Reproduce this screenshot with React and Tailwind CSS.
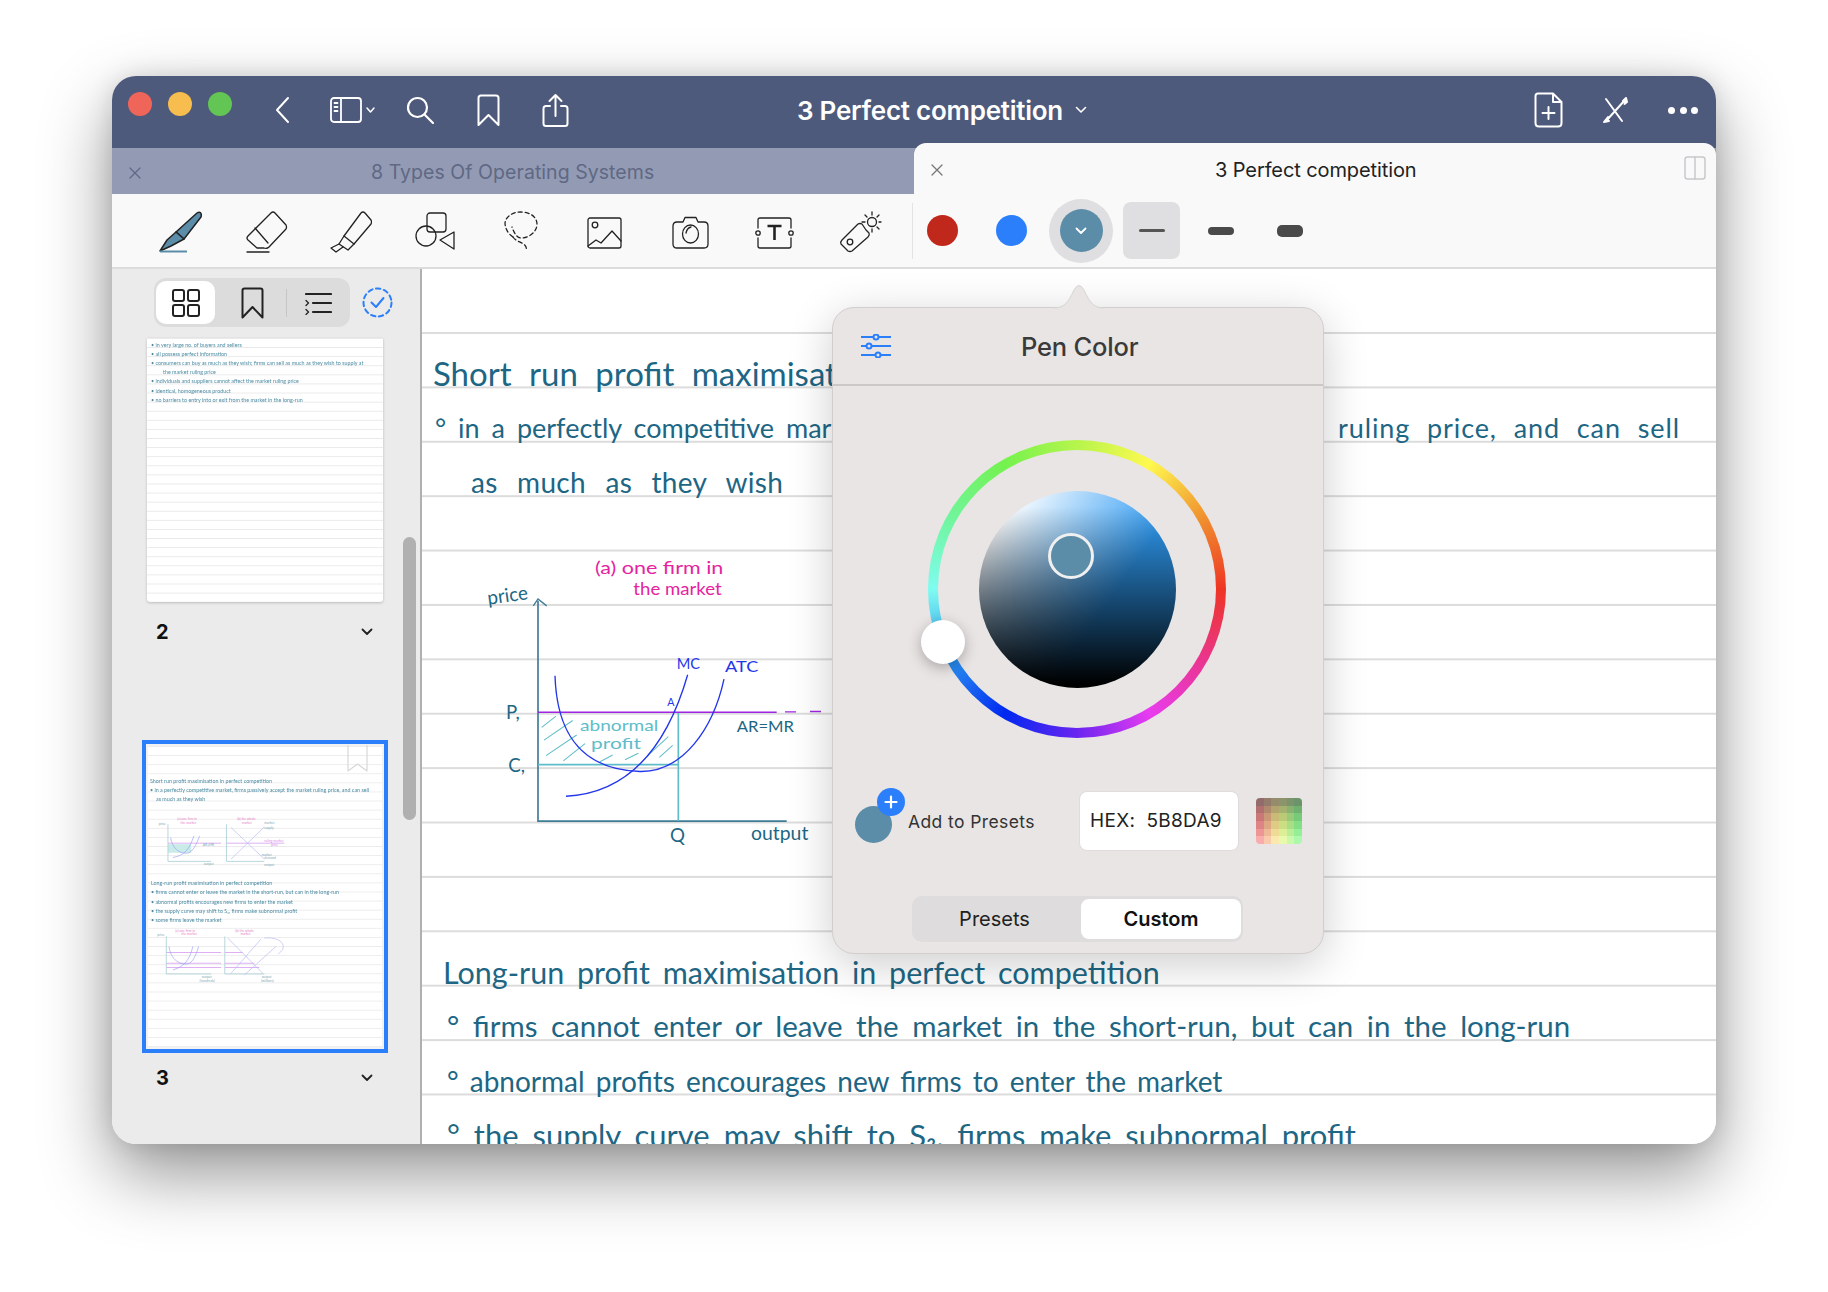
import React from "react";

const ui = "font-['Inter','Liberation_Sans',sans-serif]";
const ink = "font-['Lato','Open_Sans',sans-serif] font-normal text-[#1d6684]";

const swatchCells = [];
for (let r = 0; r < 6; r++) {
  for (let c = 0; c < 6; c++) {
    swatchCells.push({
      key: `${r}-${c}`,
      color: `hsl(${c * 24} ${16 + r * 14}% ${50 + r * 6.5}%)`,
    });
  }
}

function Stroke({ w, h, sw = 2, color = "#fff", children }) {
  return (
    <svg width={w} height={h} viewBox={`0 0 ${w} ${h}`} fill="none" stroke={color} strokeWidth={sw} strokeLinecap="round" strokeLinejoin="round" className="shrink-0">
      {children}
    </svg>
  );
}

function TitleBar() {
  return (
    <div className="flex h-[72px] items-center bg-[#4e5a7b] pb-1 pl-4 pr-[18px]">
      <div className="flex -translate-y-1.5 gap-4">
        <div className="h-6 w-6 rounded-full bg-[#f0655a]" />
        <div className="h-6 w-6 rounded-full bg-[#f7bd4f]" />
        <div className="h-6 w-6 rounded-full bg-[#62c554]" />
      </div>
      <div className="ml-[42px]">
        <Stroke w={16} h={28}>
          <path d="M14 2 L3 14 L14 26" />
        </Stroke>
      </div>
      <div className="ml-10">
        <Stroke w={48} h={26} sw={1.8}>
          <rect x="1" y="1" width="30" height="24" rx="3" />
          <path d="M11 1 V25 M4.5 6 H7.5 M4.5 10 H7.5 M4.5 14 H7.5" />
          <path d="M37 11 L40.5 15 L44 11" strokeWidth="1.5" />
        </Stroke>
      </div>
      <div className="ml-7">
        <Stroke w={28} h={28} sw={2.2}>
          <circle cx="11.5" cy="11.5" r="9.5" />
          <path d="M18.5 18.5 L27 27" />
        </Stroke>
      </div>
      <div className="ml-[43px]">
        <Stroke w={23} h={33} sw={2}>
          <path d="M1.5 4 Q1.5 1.5 4 1.5 H19 Q21.5 1.5 21.5 4 V31 L11.5 21 L1.5 31 Z" />
        </Stroke>
      </div>
      <div className="ml-[42px]">
        <Stroke w={27} h={35} sw={2}>
          <path d="M8 13 H4 Q1.5 13 1.5 15.5 V30.5 Q1.5 33 4 33 H23 Q25.5 33 25.5 30.5 V15.5 Q25.5 13 23 13 H19" />
          <path d="M13.5 23 V2 M7.5 8 L13.5 2 L19.5 8" />
        </Stroke>
      </div>
      <div className={`${ui} ml-[228px] flex items-center gap-3 text-[26px] font-semibold tracking-[-0.25px] text-white`}>
        <span>3 Perfect competition</span>
        <Stroke w={12} h={8} sw={1.6}>
          <path d="M1.5 1.5 L6 6 L10.5 1.5" />
        </Stroke>
      </div>
      <div className="ml-auto flex items-center gap-10">
        <Stroke w={29} h={36} sw={2}>
          <path d="M4 1.5 H19 L27.5 10 V31 Q27.5 34.5 24 34.5 H5 Q1.5 34.5 1.5 31 V4 Q1.5 1.5 4 1.5 Z M19 1.5 V10 H27.5" />
          <path d="M14.5 15 V27 M8.5 21 H20.5" />
        </Stroke>
        <Stroke w={25} h={26} sw={2}>
          <path d="M3 2 L19 24 M22 3 L3 24" />
          <path d="M20 4 L23 1 L24 5 L21.5 7" fill="#fff" />
          <path d="M5 20 L1 25 L6 24" fill="#fff" />
        </Stroke>
        <div className="flex w-[30px] justify-between">
          <div className="h-[7px] w-[7px] rounded-full bg-white" />
          <div className="h-[7px] w-[7px] rounded-full bg-white" />
          <div className="h-[7px] w-[7px] rounded-full bg-white" />
        </div>
      </div>
    </div>
  );
}

function Tabs() {
  return (
    <div className={`${ui} flex h-[46px] bg-[#939bb4]`}>
      <div className="flex w-[802px] items-center pl-[17px] pt-1 text-[19.5px] tracking-[0.05px] text-[#5f6884]">
        <Stroke w={12} h={12} sw={1.3} color="#5f6884">
          <path d="M1 1 L11 11 M11 1 L1 11" />
        </Stroke>
        <span className="ml-[230px]">8 Types Of Operating Systems</span>
      </div>
      <div className="-mt-[5px] flex h-[51px] flex-1 items-center rounded-t-[12px] bg-[#f9f9f9] pl-[17px] pr-2.5 pt-0.5 text-[#222]">
        <Stroke w={12} h={12} sw={1.3} color="#777">
          <path d="M1 1 L11 11 M11 1 L1 11" />
        </Stroke>
        <span className="ml-[272px] text-[20px] tracking-[-0.1px]">3 Perfect competition</span>
        <div className="ml-auto mb-1">
          <Stroke w={22} h={24} sw={1.5} color="#c8c8cc">
            <rect x="1" y="1" width="20" height="22" rx="2.5" />
            <path d="M11 1 V23" />
          </Stroke>
        </div>
      </div>
    </div>
  );
}

function Toolbar() {
  const k = "#222";
  return (
    <div className="flex h-[75px] items-center border-b-2 border-[#dcdcdc] bg-[#f9f9f9] pl-[47px]">
      <svg width="43" height="42" viewBox="0 0 43 42" className="mt-[2px] shrink-0">
        <path d="M38 2 C41 0 43 2 42 6 L25 28 L17 21 Z" fill="#5b8da9" stroke="#222" strokeWidth="1.5" strokeLinejoin="round" />
        <path d="M17 21 L25 28 L12 35 L1 40 L8 29 Z" fill="#5b8da9" stroke="#222" strokeWidth="1.5" strokeLinejoin="round" />
        <path d="M1 40.5 H28" stroke="#5b8da9" strokeWidth="2" />
      </svg>
      <div className="ml-11 mt-[2px]">
        <Stroke w={42} h={42} sw={1.3} color={k}>
          <path d="M25 2 Q27 0 29 2 L40 14 Q41 16 40 18 L23 36 Q21 38 18 37 H11 L2 29 Q0 27 2 25 Z" />
          <path d="M9 17 L22 32" />
          <path d="M1 41 H23" />
        </Stroke>
      </div>
      <div className="ml-[42px] mt-[2px]">
        <Stroke w={42} h={42} sw={1.3} color={k}>
          <path d="M31 2 Q33 0 35 2 L41 9 Q42 11 41 13 L24 33 L14 25 Z" />
          <path d="M14 25 L9 33 L18 39 L24 33" />
          <path d="M9 33 L1 37 L6 41 L13 36" />
        </Stroke>
      </div>
      <div className="ml-[43px] mt-[2px]">
        <Stroke w={40} h={39} sw={1.3} color={k}>
          <rect x="12" y="1" width="19" height="19" rx="3" />
          <circle cx="11" cy="24" r="10" />
          <path d="M39 20 V37 L25 28 Z" />
        </Stroke>
      </div>
      <div className="ml-[49px] mt-[2px]">
        <Stroke w={34} h={41} sw={1.3} color={k}>
          <path d="M9 26 C3 22 1 16 1 12 C2 5 9 1 17 1 C26 1 33 6 33 13 C33 21 25 27 17 27 C13 27 10 22 8 16" strokeDasharray="4 3" />
          <path d="M9 26 C12 31 20 31 22 36 L23 40" strokeDasharray="4 3" />
        </Stroke>
      </div>
      <div className="ml-[49px] mt-1">
        <Stroke w={35} h={32} sw={1.3} color={k}>
          <rect x="1" y="1" width="33" height="30" rx="2" />
          <circle cx="8" cy="8" r="2.8" />
          <path d="M1 29 L9 23 L14 26 L25 14 L34 24" />
        </Stroke>
      </div>
      <div className="ml-[50px] mt-1">
        <Stroke w={37} h={33} sw={1.3} color={k}>
          <path d="M5 6 H11 L13 1.5 H24 L26 6 H32 Q36 6 36 10 V28 Q36 32 32 32 H5 Q1 32 1 28 V10 Q1 6 5 6 Z" />
          <ellipse cx="18.5" cy="18" rx="8" ry="9" />
          <path d="M14 17 Q15 12 19 11" />
        </Stroke>
      </div>
      <div className="ml-[46px] mt-1">
        <Stroke w={39} h={32} sw={1.3} color={k}>
          <path d="M3 11 V3 Q3 1 5 1 H34 Q36 1 36 3 V11 M36 21 V29 Q36 31 34 31 H5 Q3 31 3 29 V21" />
          <circle cx="3" cy="16" r="2.2" />
          <circle cx="36" cy="16" r="2.2" />
          <path d="M12.5 9 H26.5 M19.5 9 V23" strokeWidth="2.6" strokeLinecap="butt" />
        </Stroke>
      </div>
      <div className="ml-[45px] mt-[2px]">
        <Stroke w={43} h={42} sw={1.3} color={k}>
          <path d="M27 19 L30 22 Q31 24 29 26 L13 40 Q11 41 9 40 L2 33 Q1 31 3 29 L19 13 Q21 12 23 13 Z" />
          <circle cx="11" cy="31" r="2.8" />
          <circle cx="33" cy="11" r="4.5" />
          <path d="M33 1 V4 M33 18 V21 M23 11 H26 M40 11 H42 M26 4 L28 6 M40 4 L38 6 M38 16 L40 18" />
        </Stroke>
      </div>
      <div className="ml-[30px] h-14 w-px bg-[#e3e3e3]" />
      <div className="ml-3.5 h-[31px] w-[31px] rounded-full bg-[#c0281c]" />
      <div className="ml-[38px] h-[31px] w-[31px] rounded-full bg-[#2b7ffb]" />
      <div className="ml-[22px] flex h-16 w-16 items-center justify-center rounded-full bg-[#dfdfe1]">
        <div className="flex h-[43px] w-[43px] items-center justify-center rounded-full bg-[#5b8da9]">
          <Stroke w={12} h={8} sw={1.8}>
            <path d="M1.5 1.5 L6 6 L10.5 1.5" />
          </Stroke>
        </div>
      </div>
      <div className="ml-2.5 flex gap-3">
        <div className="flex h-[57px] w-[57px] items-center justify-center rounded-[8px] bg-[#dfdfe1]">
          <div className="h-[3px] w-[26px] rounded-full bg-[#555]" />
        </div>
        <div className="flex h-[57px] w-[57px] items-center justify-center">
          <div className="h-2 w-[26px] rounded-full bg-[#4a4a4a]" />
        </div>
        <div className="flex h-[57px] w-[57px] items-center justify-center">
          <div className="h-3 w-[26px] rounded-[5px] bg-[#4a4a4a]" />
        </div>
      </div>
    </div>
  );
}

function MiniRow({ children, indent = "ml-1.5", tone = "text-[#4b8ba3]" }) {
  return (
    <div className={`flex h-[9.1px] items-end whitespace-nowrap font-['Lato',sans-serif] text-[5.35px] leading-[9px] blur-[0.35px] ${indent} ${tone}`}>
      {children}
    </div>
  );
}

function MiniChartOne() {
  return (
    <svg width="236" height="53" viewBox="80 275 710 160" fill="none" preserveAspectRatio="none" className="block">
      <rect x="140" y="360" width="70" height="26" fill="#c9ece9" />
      <path d="M140 300 V412 H270 M316 300 V412 H430" stroke="#a9cfd6" strokeWidth="2.5" />
      <path d="M140 357 H300 M316 357 H490" stroke="#deb0f3" strokeWidth="3" />
      <path d="M148 340 C155 385 190 392 205 385 C220 375 230 350 235 335 M155 400 C190 395 205 375 218 335" stroke="#9aa0f2" strokeWidth="2" />
      <path d="M330 310 L430 405 M330 405 L430 308" stroke="#b5b8f2" strokeWidth="2" />
      <g fill="#e884c8" fontSize="10" fontFamily="Lato">
        <text x="168" y="288">(a) one firm in</text>
        <text x="178" y="298">the market</text>
        <text x="348" y="288">(b) the whole</text>
        <text x="362" y="298">market</text>
      </g>
      <g fill="#7fa8b5" fontSize="10" fontFamily="Lato">
        <text x="112" y="302">price</text>
        <text x="245" y="366">AR=MR</text>
        <text x="248" y="423">output</text>
        <text x="430" y="300">market</text>
        <text x="430" y="314">supply</text>
        <text x="422" y="395">market</text>
        <text x="430" y="406">demand</text>
        <text x="430" y="425">output</text>
      </g>
      <text x="430" y="355" fill="#d88ae8" fontSize="10" fontFamily="Lato">ruling market</text>
      <text x="450" y="366" fill="#d88ae8" fontSize="10" fontFamily="Lato">price</text>
    </svg>
  );
}

function MiniChartTwo() {
  return (
    <svg width="236" height="57" viewBox="80 635 710 170" fill="none" preserveAspectRatio="none" className="block">
      <path d="M135 660 V772 H270 M311 660 V772 H430" stroke="#a9cfd6" strokeWidth="2.5" />
      <path d="M135 708 H300 M311 708 H365 M135 740 H300 M311 740 H400 M135 753 H300 M311 753 H415" stroke="#deb0f3" strokeWidth="3" />
      <path d="M143 690 C150 740 190 748 205 740 C220 730 228 705 232 690 M155 760 C190 750 205 730 215 690" stroke="#9aa0f2" strokeWidth="2" />
      <path d="M320 665 L425 770 M330 770 L420 668 M370 775 L465 690 M430 665 C480 660 505 690 472 712" stroke="#b5b8f2" strokeWidth="2" />
      <g fill="#e884c8" fontSize="10" fontFamily="Lato">
        <text x="162" y="646">(a) one firm in</text>
        <text x="180" y="657">the market</text>
        <text x="342" y="648">(b) the whole</text>
        <text x="358" y="656">market</text>
      </g>
      <g fill="#7fa8b5" fontSize="10" fontFamily="Lato">
        <text x="108" y="660">price</text>
        <text x="242" y="785">output</text>
        <text x="235" y="797">(hundreds)</text>
        <text x="422" y="785">output</text>
        <text x="420" y="797">(millions)</text>
      </g>
    </svg>
  );
}

function Sidebar() {
  return (
    <div className="relative flex w-[310px] shrink-0 flex-col border-r-2 border-[#b0b0b0] bg-[#ebebeb]">
      <div className="ml-[42px] mt-[9px] flex items-center">
        <div className="flex h-[49px] w-[196px] items-center rounded-[12px] bg-[#dcdcdc] pl-0.5">
          <div className="flex h-[43px] w-[59px] items-center justify-center rounded-[10px] bg-white">
            <Stroke w={28} h={28} sw={2} color="#222">
              <rect x="1" y="1" width="11" height="11" rx="2" />
              <rect x="16" y="1" width="11" height="11" rx="2" />
              <rect x="1" y="16" width="11" height="11" rx="2" />
              <rect x="16" y="16" width="11" height="11" rx="2" />
            </Stroke>
          </div>
          <div className="ml-[26px]">
            <Stroke w={23} h={32} sw={2} color="#222">
              <path d="M1.5 3.5 Q1.5 1.5 3.5 1.5 H19.5 Q21.5 1.5 21.5 3.5 V30.5 L11.5 20 L1.5 30.5 Z" />
            </Stroke>
          </div>
          <div className="ml-[22px] h-7 w-px bg-[#c6c6c6]" />
          <div className="ml-[18px]">
            <Stroke w={27} h={24} sw={2.2} color="#222">
              <path d="M1 3 H26 M8 12 H26 M8 21 H26" />
              <path d="M1 9.5 L3.5 12 L1 14.5 M1 18.5 L3.5 21 L1 23.5" strokeWidth="1.3" />
            </Stroke>
          </div>
        </div>
        <div className="ml-3">
          <Stroke w={31} h={31} sw={2} color="#2b7ffb">
            <circle cx="15.5" cy="15.5" r="14" strokeDasharray="4.5 3.5" />
            <path d="M9.5 15.5 L14 20 L21.5 11" />
          </Stroke>
        </div>
      </div>

      <div className="ml-[35px] mt-[11px] h-[264px] w-[236px] overflow-hidden rounded-b-[3px] bg-white bg-[linear-gradient(to_bottom,#e9e9e9_1px,transparent_1px)] bg-size-[100%_9.1px] pt-[3px] shadow-[0_1px_3px_rgba(0,0,0,0.2)]">
        <MiniRow indent="ml-1">• in very large no. of buyers and sellers</MiniRow>
        <MiniRow indent="ml-1">• all possess perfect information</MiniRow>
        <MiniRow indent="ml-1">• consumers can buy as much as they wish; firms can sell as much as they wish to supply at</MiniRow>
        <MiniRow indent="ml-4">the market ruling price</MiniRow>
        <MiniRow indent="ml-1">• individuals and suppliers cannot affect the market ruling price</MiniRow>
        <MiniRow indent="ml-1">• identical, homogeneous product</MiniRow>
        <MiniRow indent="ml-1">• no barriers to entry into or exit from the market in the long-run</MiniRow>
      </div>
      <div className={`${ui} ml-[44px] mt-[18px] flex h-6 w-[217px] items-center justify-between text-[20px] font-bold text-[#111]`}>
        <span>2</span>
        <Stroke w={12} h={8} sw={1.8} color="#222">
          <path d="M1.5 1.5 L6 6 L10.5 1.5" />
        </Stroke>
      </div>

      <div className="relative ml-[30px] mt-24 h-[313px] w-[246px] border-4 border-[#2b7ffb] bg-[#f2f2f2] p-0.5">
        <div className="h-full bg-white bg-[linear-gradient(to_bottom,#ececec_1px,transparent_1px)] bg-size-[100%_9.1px] pt-[31px]">
          <MiniRow indent="ml-[2px]">Short run profit maximisation in perfect competition</MiniRow>
          <MiniRow indent="ml-[2px]">• in a perfectly competitive market, firms passively accept the market ruling price, and can sell</MiniRow>
          <MiniRow indent="ml-2">as much as they wish</MiniRow>
          <div className="mt-[12px]">
            <MiniChartOne />
          </div>
          <div className="mt-[10px]" />
          <MiniRow indent="ml-[3px]">Long-run profit maximisation in perfect competition</MiniRow>
          <MiniRow indent="ml-[3px]">• firms cannot enter or leave the market in the short-run, but can in the long-run</MiniRow>
          <MiniRow indent="ml-[3px]">• abnormal profits encourages new firms to enter the market</MiniRow>
          <MiniRow indent="ml-[3px]">• the supply curve may shift to S₂, firms make subnormal profit</MiniRow>
          <MiniRow indent="ml-[3px]">• some firms leave the market</MiniRow>
          <div className="mt-[3px]">
            <MiniChartTwo />
          </div>
        </div>
        <div className="absolute right-[16px] top-[1px]">
          <Stroke w={21} h={27} sw={1.2} color="#d8d8d8">
            <path d="M1 0 V26 L10.5 19 L20 26 V0" />
          </Stroke>
        </div>
      </div>
      <div className={`${ui} ml-[44px] mt-[13px] flex h-6 w-[217px] items-center justify-between text-[20px] font-bold text-[#111]`}>
        <span>3</span>
        <Stroke w={12} h={8} sw={1.8} color="#222">
          <path d="M1.5 1.5 L6 6 L10.5 1.5" />
        </Stroke>
      </div>

      <div className="absolute left-[291px] top-[268px] h-[283px] w-[13px] rounded-full bg-[#b0b0b0]" />
    </div>
  );
}

function InkRow({ children, className = "" }) {
  return (
    <div className={`${ink} flex h-[54.4px] items-end whitespace-nowrap leading-[26px] ${className}`}>
      {children}
    </div>
  );
}

function Chart() {
  const teal = "#5fbdc9";
  const dark = "#1d6684";
  const blue = "#2236ea";
  const pink = "#e5239f";
  const fit = "spacingAndGlyphs";
  return (
    <svg width="418" height="435.2" viewBox="6 453 1254 1264" fill="none" preserveAspectRatio="none" className="block">
      <path d="M354 760 V1400 H1100" stroke="#3f7c96" strokeWidth="5" />
      <path d="M340 775 L354 755 L380 775" stroke="#3f7c96" strokeWidth="4" />
      <path d="M775 1084 V1400 M354 1236 H775" stroke={teal} strokeWidth="5" />
      <path d="M354 1084 H1070" stroke="#a024e2" strokeWidth="4" />
      <path d="M1095 1083 H1128 M1170 1082 H1203" stroke="#a024e2" strokeWidth="4" />
      <path d="M365 1128 L408 1095 M372 1165 L458 1108 M378 1210 L470 1150 M430 1225 L495 1175 M540 1228 L578 1208 M615 1222 L655 1203 M683 1210 L745 1155 M718 1215 L758 1180" stroke={teal} strokeWidth="3" />
      <path d="M405 978 C410 1130 470 1250 660 1256 C790 1258 880 1130 912 988" stroke={blue} strokeWidth="4" />
      <path d="M438 1328 C600 1320 730 1220 803 975" stroke={blue} strokeWidth="4" />
      <g fontFamily="Lato" fontWeight="400">
        <text x="205" y="772" fontSize="56" fill={dark} textLength="122" lengthAdjust={fit} transform="rotate(-8 205 772)">price</text>
        <text x="525" y="683" fontSize="50" fill={pink} textLength="385" lengthAdjust={fit}>(a) one firm in</text>
        <text x="640" y="744" fontSize="50" fill={pink} textLength="265" lengthAdjust={fit}>the market</text>
        <text x="770" y="958" fontSize="44" fill={blue} textLength="70" lengthAdjust={fit}>MC</text>
        <text x="915" y="968" fontSize="44" fill={blue} textLength="100" lengthAdjust={fit}>ATC</text>
        <text x="742" y="1066" fontSize="32" fill={blue}>A</text>
        <text x="950" y="1140" fontSize="46" fill={dark} textLength="172" lengthAdjust={fit}>AR=MR</text>
        <text x="480" y="1138" fontSize="46" fill={teal} textLength="235" lengthAdjust={fit}>abnormal</text>
        <text x="513" y="1192" fontSize="46" fill={teal} textLength="150" lengthAdjust={fit}>profit</text>
        <text x="258" y="1105" fontSize="56" fill={dark}>P,</text>
        <text x="265" y="1258" fontSize="56" fill={dark}>C,</text>
        <text x="750" y="1462" fontSize="56" fill={dark}>Q</text>
        <text x="993" y="1456" fontSize="56" fill={dark} textLength="172" lengthAdjust={fit}>output</text>
      </g>
    </svg>
  );
}

function NotePage() {
  return (
    <div className="flex-1 overflow-hidden bg-white">
      <div className="mt-[63px] h-[830px] bg-[linear-gradient(to_bottom,#dcdcdc_2px,transparent_2px)] bg-size-[100%_54.4px]">
        <InkRow className="pl-[11px] text-[33px] [word-spacing:9px]">Short run profit maximisation in perfect competition</InkRow>
        <InkRow className="pl-[13px] pr-[36px] text-[27px]">
          <span className="[word-spacing:5px]">° in a perfectly competitive market,</span>
          <span className="ml-auto tracking-[0.9px] [word-spacing:9px]">ruling price, and can sell</span>
        </InkRow>
        <InkRow className="pl-[49px] text-[28px] tracking-[0.3px] [word-spacing:12px]">as much as they wish</InkRow>
        <Chart />
        <InkRow className="pl-[21px] text-[30.5px] [word-spacing:5px]">Long-run profit maximisation in perfect competition</InkRow>
        <InkRow className="pl-[25px] text-[29.5px] [word-spacing:6px]">° firms cannot enter or leave the market in the short-run, but can in the long-run</InkRow>
        <InkRow className="pl-[25px] text-[28px] [word-spacing:4px]">° abnormal profits encourages new firms to enter the market</InkRow>
        <InkRow className="pl-[25px] text-[31px] [word-spacing:6px]">° the supply curve may shift to S₂, firms make subnormal profit</InkRow>
      </div>
    </div>
  );
}

function PenColorPopover() {
  return (
    <div className={`${ui} absolute left-[720px] top-[231px] h-[647px] w-[492px] rounded-[22px] border border-[#d2cecd] bg-[#e9e5e4] shadow-[0_10px_45px_rgba(0,0,0,0.2)]`}>
      <svg width="52" height="26" viewBox="0 0 52 26" className="absolute left-[220px] top-[-25px]">
        <path d="M1 25 C11 25 15 20 21 7 Q26 -2 31 7 C37 20 41 25 51 25" fill="#e9e5e4" stroke="#d8d4d3" strokeWidth="1" />
      </svg>
      <div className="flex h-[78px] items-center border-b-2 border-[#cbc8c7] pl-7">
        <Stroke w={30} h={24} sw={2} color="#2b7ffb">
          <path d="M0 3 H12 M18 3 H30 M0 12 H5 M11 12 H30 M0 21 H14 M20 21 H30" />
          <circle cx="15" cy="3" r="2.5" />
          <circle cx="8" cy="12" r="2.5" />
          <circle cx="17" cy="21" r="2.5" />
        </Stroke>
        <div className="ml-[130px] pt-0.5 text-[25.5px] font-medium tracking-[-0.2px] text-[#3a3a3a]">Pen Color</div>
      </div>

      <div className="ml-[95px] mt-[54px] flex h-[298px] w-[298px] items-center justify-center rounded-full bg-[conic-gradient(from_90deg,#ee3524,#ea3590,#e83cf0,#6a25f0,#0028f0,#2a90f0,#7ffcf0,#70f59a,#74f24e,#b6f54c,#fff94f,#f0922f,#ee3524)]">
        <div className="relative flex h-[278px] w-[278px] items-center justify-center rounded-full bg-[#e9e5e4]">
          <div className="relative h-[197px] w-[197px] rounded-full bg-[linear-gradient(to_bottom,transparent_8%,#000_98%),linear-gradient(125deg,#fff_12%,#2f9bf3_62%)]">
            <div className="absolute left-[69px] top-[42px] h-[46px] w-[46px] rounded-full border-[3px] border-[#f0f0f0] bg-[#5b8da9]" />
          </div>
          <div className="absolute left-[-17px] top-[170px] h-11 w-11 rounded-full bg-white shadow-[0_4px_14px_rgba(0,0,0,0.28)]" />
        </div>
      </div>

      <div className="ml-[22px] mt-[53px] flex h-[60px] items-center">
        <div className="relative h-[37px] w-[37px] translate-y-[3px] rounded-full bg-[#5b8da9]">
          <div className="absolute left-[22px] top-[-18px] flex h-[28px] w-[28px] items-center justify-center rounded-full bg-[#2b7ffb]">
            <Stroke w={14} h={14} sw={2.2}>
              <path d="M7 1.5 V12.5 M1.5 7 H12.5" />
            </Stroke>
          </div>
        </div>
        <div className="ml-[16px] w-[171px] pt-0.5 text-[17.5px] tracking-[0.4px] text-[#333]">Add to Presets</div>
        <div className="flex h-[60px] w-[160px] items-center whitespace-pre rounded-[8px] border border-[#dfdcdb] bg-white pl-[10px] text-[19px] tracking-[0.3px] text-[#222]">HEX:  5B8DA9</div>
        <div className="ml-[17px] grid h-[46px] w-[46px] grid-cols-6 overflow-hidden rounded-[4px]">
          {swatchCells.map((cell) => (
            <div key={cell.key} style={{ backgroundColor: cell.color }} />
          ))}
        </div>
      </div>

      <div className="ml-[79px] mt-[45px] flex h-[46px] w-[331px] items-center rounded-[10px] bg-[#dedcdd] text-[20px] text-[#222]">
        <div className="flex w-[165px] justify-center">Presets</div>
        <div className="ml-[4px] flex h-10 w-[160px] items-center justify-center rounded-[8px] bg-white font-semibold text-[#111]">Custom</div>
      </div>
    </div>
  );
}

export default function App() {
  return (
    <div className="h-[1292px] w-[1828px] overflow-hidden bg-white pl-[112px] pt-[76px]">
      <div className="relative flex h-[1068px] w-[1604px] flex-col overflow-hidden rounded-[24px] shadow-[0_30px_70px_rgba(0,0,0,0.42),0_0_25px_rgba(0,0,0,0.12)]">
        <TitleBar />
        <Tabs />
        <Toolbar />
        <div className="flex min-h-0 flex-1">
          <Sidebar />
          <NotePage />
        </div>
        <PenColorPopover />
      </div>
    </div>
  );
}
